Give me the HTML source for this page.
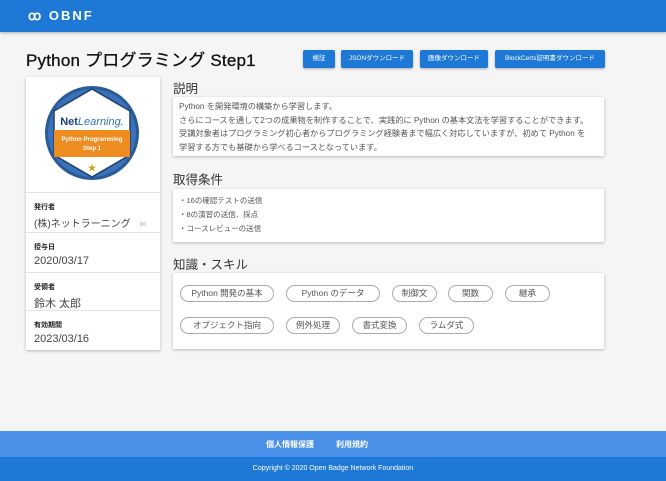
<!DOCTYPE html>
<html><head><meta charset="utf-8"><style>
*{box-sizing:border-box;margin:0;padding:0}
body{width:666px;height:481px;background:#f5f5f5;font-family:"Liberation Sans","Noto Sans CJK JP",sans-serif;position:relative;overflow:hidden;color:#333}
.hdr{position:absolute;left:0;top:0;width:666px;height:32px;background:#1e78d6;box-shadow:0 1px 3px rgba(0,0,0,.3)}
.logo{position:absolute;left:28px;top:8px;color:#fff;font-weight:bold;font-size:13px;letter-spacing:2px}
h1{position:absolute;left:26px;top:46px;font-size:17px;font-weight:normal;color:#111;letter-spacing:.2px;-webkit-text-stroke:.3px #111}
.btn{position:absolute;top:50px;height:18px;background:#1e78d6;color:#fff;font-size:6.5px;text-align:center;line-height:18px;border-radius:2px;box-shadow:0 1px 2px rgba(0,0,0,.3)}
.card{position:absolute;background:#fff;box-shadow:0 1px 3px rgba(0,0,0,.25)}
.row{position:absolute;left:0;width:134px;border-top:1px solid #e4e4e4;padding:9px 0 0 8px}
.lab{font-size:7px;font-weight:bold;color:#222}
.val{font-size:11px;color:#444;margin-top:3px}
.h2{position:absolute;left:173px;font-size:12.5px;color:#333}
.txt{font-size:8.2px;line-height:13.5px;color:#555}
.chip{position:absolute;height:17px;border:1px solid #aaa;border-radius:9px;font-size:8.5px;color:#555;text-align:center;line-height:15px}
.f1{position:absolute;left:0;top:431px;width:666px;height:26px;background:#4a90e8;color:#fff;font-size:8px;font-weight:bold}
.f2{position:absolute;left:0;top:457px;width:666px;height:24px;background:#1e78d6;color:#fff;font-size:7px;text-align:center;line-height:24px}
</style></head><body>
<div class="hdr"><div class="logo"><span style="font-size:13px">ꝏ</span> OBNF</div></div>
<h1>Python プログラミング Step1</h1>
<div class="btn" style="left:303px;width:32px">検証</div>
<div class="btn" style="left:341px;width:72px">JSONダウンロード</div>
<div class="btn" style="left:420px;width:68px">画像ダウンロード</div>
<div class="btn" style="left:495px;width:110px">BlockCerts証明書ダウンロード</div>

<div class="card" style="left:26px;top:77px;width:134px;height:273px">
<svg width="134" height="115" style="position:absolute;left:0;top:0">
<circle cx="66" cy="56" r="47" fill="#2a5a9a"/>
<circle cx="66" cy="56" r="44" fill="#3a72b8"/>
<polygon points="66,12 104,34 104,78 66,100 28,78 28,34" fill="#fff" stroke="#1f3f70" stroke-width="1.5"/>
<rect x="28" y="53" width="76" height="27" fill="#ee8c1f"/>
<text x="66" y="48" text-anchor="middle" font-size="11" font-weight="bold" fill="#1f3f80" font-family="Liberation Sans">Net<tspan font-style="italic" font-weight="normal" fill="#2f6fb8">Learning.</tspan></text>
<text x="66" y="64" text-anchor="middle" font-size="6" font-weight="bold" fill="#fff" font-family="Liberation Sans">Python Programming</text>
<text x="66" y="73" text-anchor="middle" font-size="6" font-weight="bold" fill="#fff" font-family="Liberation Sans">Step 1</text>
<text x="66" y="94" text-anchor="middle" font-size="9" fill="#c9a227">★</text>
</svg>
<div class="row" style="top:115px;height:40px"><div class="lab">発行者</div><div class="val" style="font-size:10px">(株)ネットラーニング <span style="color:#bbb;font-size:8px;margin-left:6px">✉</span></div></div>
<div class="row" style="top:155px;height:40px"><div class="lab">授与日</div><div class="val">2020/03/17</div></div>
<div class="row" style="top:195px;height:38px"><div class="lab">受領者</div><div class="val">鈴木 太郎</div></div>
<div class="row" style="top:233px;height:40px"><div class="lab">有効期間</div><div class="val">2023/03/16</div></div>
</div>

<div class="h2" style="top:78px">説明</div>
<div class="card txt" style="left:173px;top:97px;width:431px;height:59px;padding:3px 6px">Python を開発環境の構築から学習します。<br>さらにコースを通して2つの成果物を制作することで、実践的に Python の基本文法を学習することができます。<br>受講対象者はプログラミング初心者からプログラミング経験者まで幅広く対応していますが、初めて Python を<br>学習する方でも基礎から学べるコースとなっています。</div>

<div class="h2" style="top:169px">取得条件</div>
<div class="card txt" style="left:173px;top:189px;width:431px;height:53px;padding:5px 6px;font-size:7.5px;line-height:14px">・16の確認テストの送信<br>・8の演習の送信、採点<br>・コースレビューの送信</div>

<div class="h2" style="top:254px">知識・スキル</div>
<div class="card" style="left:173px;top:273px;width:431px;height:76px"></div>
<div class="chip" style="left:180px;top:285px;width:94px">Python 開発の基本</div>
<div class="chip" style="left:286px;top:285px;width:94px">Python のデータ</div>
<div class="chip" style="left:392px;top:285px;width:45px">制御文</div>
<div class="chip" style="left:448px;top:285px;width:45px">関数</div>
<div class="chip" style="left:505px;top:285px;width:45px">継承</div>
<div class="chip" style="left:180px;top:317px;width:94px">オブジェクト指向</div>
<div class="chip" style="left:286px;top:317px;width:54px">例外処理</div>
<div class="chip" style="left:352px;top:317px;width:55px">書式変換</div>
<div class="chip" style="left:419px;top:317px;width:55px">ラムダ式</div>

<div class="f1"><span style="position:absolute;left:266px;top:8px">個人情報保護</span><span style="position:absolute;left:336px;top:8px">利用規約</span></div>
<div class="f2">Copyright © 2020 Open Badge Network Foundation</div>
</body></html>
